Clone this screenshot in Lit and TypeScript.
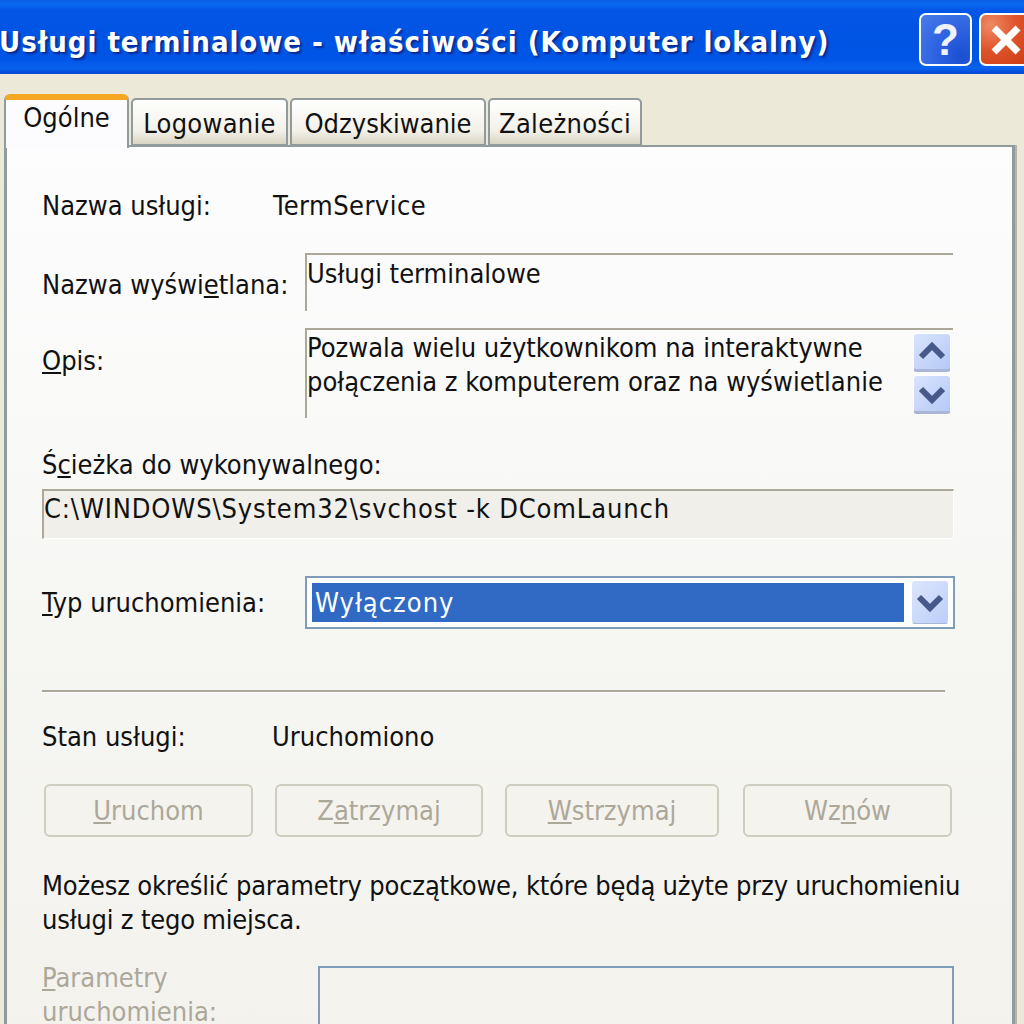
import { LitElement, html, css, svg } from "lit";
import { customElement } from "lit/decorators.js";

const chevron = (up: boolean) => html`<svg class="chev" width="30" height="24" viewBox="0 0 30 24">
  ${svg`<path d=${up ? "M4 17 L15 6 L26 17" : "M4 7 L15 18 L26 7"} fill="none" stroke="#46598a" stroke-width="6"/>`}
</svg>`;

@customElement("app-root")
export class AppRoot extends LitElement {
  static styles = css`
    :host { display: block; width: 1024px; height: 1024px; overflow: hidden; background: #ece9d8;
      font-family: "DejaVu Sans Condensed", "DejaVu Sans", sans-serif; font-size: 27px; color: #111; }
    * { box-sizing: border-box; }
    .title { height: 74px; display: flex; align-items: center; justify-content: space-between;
      background: linear-gradient(180deg, #0a5ae0 0, #0a6af0 5%, #0456e6 14%, #0054e3 50%, #0054e6 80%, #0a62ee 92%, #0047d0 100%); overflow: hidden; }
    .title-text { font-weight: 700; font-size: 29px; color: #fff; white-space: nowrap;
      text-shadow: 2px 2px 2px #0a2a90; letter-spacing: 0.96px; margin-top: 10px; margin-left: -1px; }
    .ctl { display: flex; gap: 7px; margin-right: -8px; margin-top: 5px; flex: none; }
    .btn { width: 53px; height: 53px; border: 2.5px solid #fff; border-radius: 7px; display: flex; align-items: center; justify-content: center; }
    .help { background: radial-gradient(circle at 85% 85%, #1a4fd0 0, #2a5fe0 40%, #4a7de8 100%); color: #eef2ff;
      font: 700 44px "Liberation Sans", sans-serif; }
    .close { background: radial-gradient(circle at 20% 20%, #ee8a64 0, #e0542c 45%, #c83a12 100%); }
    .wrap { padding: 18px 9px 0 4px; }
    .tabs { display: flex; height: 54px; align-items: flex-end; position: relative; z-index: 1; }
    .tab { height: 48px; margin-right: 2px; border: 2px solid #919b9c; border-radius: 5px 5px 0 0;
      background: linear-gradient(180deg, #fff, #f3f1e8 70%, #d8d5c4); display: flex; align-items: center; justify-content: center; padding-top: 2px; white-space: nowrap; }
    .tab.on { height: 54px; width: 125px; background: #fcfcfe; border-top: 6px solid #f5a623; border-bottom: none; border-radius: 6px 6px 0 0; padding: 0 0 14px; margin-bottom: -2px; }
    .tab.wide { letter-spacing: 0.3px; }
    .panel { height: 900px; margin-top: -1px; border: 3px solid #919b9c; border-top-width: 2px; box-shadow: 2px 0 0 #b7b5a8;
      background: linear-gradient(180deg, #fdfdfe 0, #f6f6f3 55%, #f3f2ed 100%); padding: 0 0 0 35px; }
    .row { display: flex; }
    .lab { flex: none; white-space: nowrap; }
    .r1 { height: 40px; margin-top: 38px; align-items: center; }
    .r1 .lab { width: 231px; }
    .val { letter-spacing: 0.45px; }
    .l-wide { width: 263px; }
    .field { border-top: 2.5px solid #aca899; border-left: 2.5px solid #aca899; padding: 2px 0 0 0; line-height: 34px; white-space: nowrap; }
    .r2 { margin-top: 28px; height: 58px; }
    .r2 .lab { padding-top: 16px; }
    .r2 .field { width: 648px; height: 58px; }
    .r3 { margin-top: 17px; height: 90px; }
    .r3 .lab { padding-top: 17px; }
    .r3 .field { width: 648px; height: 90px; padding-top: 1px; display: flex; justify-content: space-between; }
    .spin { display: flex; flex-direction: column; gap: 3px; padding: 2px 2px 0 0; }
    .spin .sb { width: 38px; height: 39px; }
    .sb { background: linear-gradient(135deg, #d9e4fd, #b5c9f7); border: 1px solid #fff; border-bottom: 3px solid #a9b6d6; border-radius: 4px; display: flex; align-items: center; justify-content: center; }
    .r4 { margin-top: 28px; height: 36px; align-items: center; }
    .path { margin-top: 7px; width: 912px; height: 50px; border-top: 2.5px solid #aca899; border-left: 2.5px solid #aca899; border-right: 1px solid #fff; border-bottom: 1px solid #fff;
      background: #f0efe9; line-height: 36px; letter-spacing: 0.85px; white-space: nowrap; }
    .r5 { margin-top: 37px; height: 53px; align-items: center; }
    .r5 .lab { width: 263px; }
    .combo { width: 650px; height: 53px; border: 2px solid #7f9db9; background: #fff; padding: 5px 4px 5px 5px; display: flex; gap: 7px; }
    .sel { flex: 1; background: #316ac5; color: #fff; padding-left: 3px; line-height: 39px; letter-spacing: 1px; }
    .combo .sb { width: 38px; margin: -3px 0 -2px; border-bottom-width: 1px; background: linear-gradient(135deg, #dce6fd, #bccdf8); }
    .hr { width: 903px; height: 2px; margin-top: 61px; background: #aca899; box-shadow: 0 1px 0 #fff; }
    .r6 { height: 36px; margin-top: 26px; align-items: center; }
    .r6 .lab { width: 230px; }
    .btns { display: flex; margin: 30px 0 0 2px; height: 53px; gap: 22px; }
    .b { height: 53px; border: 2px solid #cfcdc0; border-radius: 6px; background: #f4f3ee; color: #aca899; display: flex; align-items: center; justify-content: center; }
    .note { margin-top: 32px; line-height: 34px; white-space: nowrap; letter-spacing: -0.2px; }
    .r7 { margin-top: 29px; color: #aca899; }
    .r7 .lab { width: 276px; line-height: 34px; margin-top: -5px; }
    .in { width: 636px; height: 60px; border: 2.5px solid #7f9db9; background: #f4f3ee; }
  `;

  render() {
    return html`
      <div class="title">
        <div class="title-text">Usługi terminalowe - właściwości (Komputer lokalny)</div>
        <div class="ctl">
          <div class="btn help">?</div>
          <div class="btn close">
            <svg width="34" height="34" viewBox="0 0 34 34"><path d="M5 5 L29 29 M29 5 L5 29" stroke="#fff" stroke-width="7" /></svg>
          </div>
        </div>
      </div>
      <div class="wrap">
        <div class="tabs">
          <div class="tab on">Ogólne</div>
          <div class="tab wide" style="width:157px">Logowanie</div>
          <div class="tab" style="width:196px">Odzyskiwanie</div>
          <div class="tab wide" style="width:154px">Zależności</div>
        </div>
        <div class="panel">
          <div class="row r1"><div class="lab">Nazwa usługi:</div><div class="val">TermService</div></div>
          <div class="row r2"><div class="lab l-wide">Nazwa wyświ<u>e</u>tlana:</div><div class="field">Usługi terminalowe</div></div>
          <div class="row r3"><div class="lab l-wide"><u>O</u>pis:</div>
            <div class="field">
              <div>Pozwala wielu użytkownikom na interaktywne<br />połączenia z komputerem oraz na wyświetlanie</div>
              <div class="spin"><div class="sb">${chevron(true)}</div><div class="sb">${chevron(false)}</div></div>
            </div>
          </div>
          <div class="row r4"><div class="lab">Ś<u>c</u>ieżka do wykonywalnego:</div></div>
          <div class="path">C:\\WINDOWS\\System32\\svchost -k DComLaunch</div>
          <div class="row r5"><div class="lab"><u>T</u>yp uruchomienia:</div>
            <div class="combo"><div class="sel">Wyłączony</div><div class="sb">${chevron(false)}</div></div>
          </div>
          <div class="hr"></div>
          <div class="row r6"><div class="lab">Stan usługi:</div><div>Uruchomiono</div></div>
          <div class="btns">
            <div class="b" style="width:209px"><span><u>U</u>ruchom</span></div>
            <div class="b" style="width:208px"><span>Z<u>a</u>trzymaj</span></div>
            <div class="b" style="width:214px"><span><u>W</u>strzymaj</span></div>
            <div class="b" style="width:209px;margin-left:2px"><span>Wz<u>n</u>ów</span></div>
          </div>
          <div class="note">Możesz określić parametry początkowe, które będą użyte przy uruchomieniu<br />usługi z tego miejsca.</div>
          <div class="row r7"><div class="lab"><u>P</u>arametry<br />uruchomienia:</div><div class="in"></div></div>
        </div>
      </div>
    `;
  }
}
